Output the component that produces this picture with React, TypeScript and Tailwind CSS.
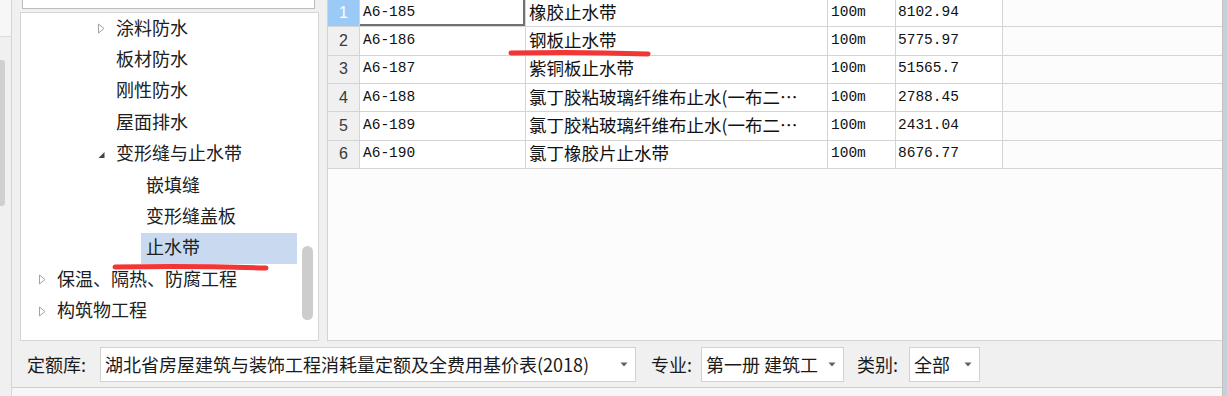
import React from 'react';

type TreeRow = {
  text: string;
  level: 1 | 3 | 4;
  arrow?: 'collapsed' | 'expanded';
  selected?: boolean;
};

const treeRows: TreeRow[] = [
  { text: '涂料防水', level: 3, arrow: 'collapsed' },
  { text: '板材防水', level: 3 },
  { text: '刚性防水', level: 3 },
  { text: '屋面排水', level: 3 },
  { text: '变形缝与止水带', level: 3, arrow: 'expanded' },
  { text: '嵌填缝', level: 4 },
  { text: '变形缝盖板', level: 4 },
  { text: '止水带', level: 4, selected: true },
  { text: '保温、隔热、防腐工程', level: 1, arrow: 'collapsed' },
  { text: '构筑物工程', level: 1, arrow: 'collapsed' },
];

const indent: Record<number, string> = {
  1: 'pl-[17px]',
  3: 'pl-[76px]',
  4: 'pl-[106px]',
};

const quotaRows = [
  { no: 1, code: 'A6-185', name: '橡胶止水带', unit: '100m', price: '8102.94' },
  { no: 2, code: 'A6-186', name: '钢板止水带', unit: '100m', price: '5775.97' },
  { no: 3, code: 'A6-187', name: '紫铜板止水带', unit: '100m', price: '51565.7' },
  { no: 4, code: 'A6-188', name: '氯丁胶粘玻璃纤维布止水(一布二…', unit: '100m', price: '2788.45' },
  { no: 5, code: 'A6-189', name: '氯丁胶粘玻璃纤维布止水(一布二…', unit: '100m', price: '2431.04' },
  { no: 6, code: 'A6-190', name: '氯丁橡胶片止水带', unit: '100m', price: '8676.77' },
];

const Arrow = ({ type }: { type?: 'collapsed' | 'expanded' }) => {
  if (type === 'collapsed') {
    return (
      <svg width="9" height="11" viewBox="0 0 9 11">
        <path d="M1.5 1 L7 5.5 L1.5 10 Z" fill="#fff" stroke="#a2a2a2" strokeWidth="1" />
      </svg>
    );
  }
  if (type === 'expanded') {
    return (
      <svg width="9" height="11" viewBox="0 0 9 11">
        <path d="M7.5 3 L7.5 9 L1.5 9 Z" fill="#444" />
      </svg>
    );
  }
  return null;
};

const Caret = () => (
  <svg width="8" height="5" viewBox="0 0 8 5">
    <path d="M0.5 0.5 L7.5 0.5 L4 4.5 Z" fill="#606060" />
  </svg>
);

const Select = ({ width, text }: { width: string; text: string }) => (
  <div className={`${width} h-[35px] bg-white border border-[#d2d2d2] flex items-center pl-[4px] pr-[7px]`}>
    <span className="flex-1 whitespace-nowrap text-[18px] text-[#1a1a1a] leading-none">{text}</span>
    <span className="ml-[2px] flex items-center">
      <Caret />
    </span>
  </div>
);

export default function App() {
  return (
    <div
      className="relative w-[1227px] h-[396px] overflow-hidden bg-[#f0f0f0] flex"
      style={{ fontFamily: '"Noto Sans CJK SC", "Noto Sans", sans-serif' }}
    >
      {/* left strip */}
      <div className="w-[12px] shrink-0 border-r border-[#d6d6d6] flex flex-col">
        <div className="h-[37px] bg-[#f7f7f7] border-b border-[#dcdcdc]" />
        <div className="mt-[23px] w-[5px] h-[146px] bg-[#d0d0d0] rounded-r-[3px]" />
      </div>

      {/* main */}
      <div className="w-[1210px] shrink-0 flex flex-col">
        <div className="h-[341px] flex">
          {/* tree column */}
          <div className="ml-[8px] w-[299px] flex flex-col">
            <div className="ml-[2px] mr-[4px] h-[9px] bg-white border border-t-0 border-[#bdbdbd]" />
            <div className="mt-[3px] flex-1 bg-white border border-[#d5d5d5] relative">
              {treeRows.map((row) => (
                <div key={row.text} className={`h-[31.4px] flex items-center ${indent[row.level]}`}>
                  <span className="w-[19px] flex items-center">
                    <Arrow type={row.arrow} />
                  </span>
                  <span
                    className={`h-[31px] flex items-center -ml-[5px] pl-[5px] pb-[3px] text-[18px] text-[#202020] whitespace-nowrap ${
                      row.selected ? 'w-[156px] bg-[#c9daf0]' : ''
                    }`}
                  >
                    {row.text}
                  </span>
                </div>
              ))}
              <div className="absolute left-[281px] top-[233px] w-[11px] h-[74px] rounded-full bg-[#cdcdcd]" />
            </div>
          </div>

          {/* splitter */}
          <div className="w-[8px]" />

          {/* grid */}
          <div className="w-[895px] bg-[#fcfcfc] border-l border-b border-[#d3d3d3]">
            <div className="-mt-px">
              {quotaRows.map((r) => (
                <div key={r.no} className="h-[28.33px] flex border-b border-[#d4d4d4]">
                  <div
                    className={`w-[32px] border-r border-[#d4d4d4] flex items-center justify-center text-[16px] ${
                      r.no === 1 ? 'bg-[#9ccaf6] text-white' : 'bg-[#f0f0f0] text-[#3a3a3a]'
                    }`}
                    style={{ fontFamily: '"Liberation Sans", sans-serif' }}
                  >
                    {r.no}
                  </div>
                  <div
                    className={`w-[166px] border-r border-[#d4d4d4] bg-white flex items-center pl-[3px] text-[14.5px] text-[#111] ${
                      r.no === 1 ? 'shadow-[inset_-2px_-2px_0_#727272]' : ''
                    }`}
                    style={{ fontFamily: '"Liberation Mono", monospace' }}
                  >
                    {r.code}
                  </div>
                  <div className="w-[302px] border-r border-[#d4d4d4] bg-white flex items-center pl-[3px] pb-[2px] text-[17.5px] text-[#111] whitespace-nowrap">
                    {r.name}
                  </div>
                  <div
                    className="w-[68px] border-r border-[#d4d4d4] bg-white flex items-center pl-[3px] text-[14.5px] text-[#111]"
                    style={{ fontFamily: '"Liberation Mono", monospace' }}
                  >
                    {r.unit}
                  </div>
                  <div
                    className="w-[107px] border-r border-[#d4d4d4] bg-white flex items-center pl-[2px] text-[14.5px] text-[#111]"
                    style={{ fontFamily: '"Liberation Mono", monospace' }}
                  >
                    {r.price}
                  </div>
                </div>
              ))}
            </div>
          </div>
        </div>

        {/* toolbar */}
        <div className="h-[47px] flex items-center pl-[15px] border-b border-[#cfcfcf] text-[#1a1a1a]">
          <span className="text-[18px] w-[73px] whitespace-nowrap">定额库:</span>
          <Select width="w-[536px]" text="湖北省房屋建筑与装饰工程消耗量定额及全费用基价表(2018)" />
          <span className="text-[18px] ml-[15px] w-[50px] whitespace-nowrap">专业:</span>
          <Select width="w-[143px]" text="第一册 建筑工" />
          <span className="text-[18px] ml-[13px] w-[52px] whitespace-nowrap">类别:</span>
          <Select width="w-[71px]" text="全部" />
        </div>
        <div className="flex-1 bg-[#f6f6f6]" />
      </div>

      {/* right edge */}
      <div className="flex-1 border-l border-[#c2c2c2] bg-[#c7cfdb]" />

      {/* red annotation strokes */}
      <svg className="absolute inset-0 pointer-events-none" width="1227" height="396">
        <path d="M115 267 Q190 265.5 266 268" stroke="#f23535" strokeWidth="5" strokeLinecap="round" fill="none" />
        <path d="M511 53 Q580 51.5 648 54" stroke="#f23535" strokeWidth="5" strokeLinecap="round" fill="none" />
      </svg>
    </div>
  );
}
